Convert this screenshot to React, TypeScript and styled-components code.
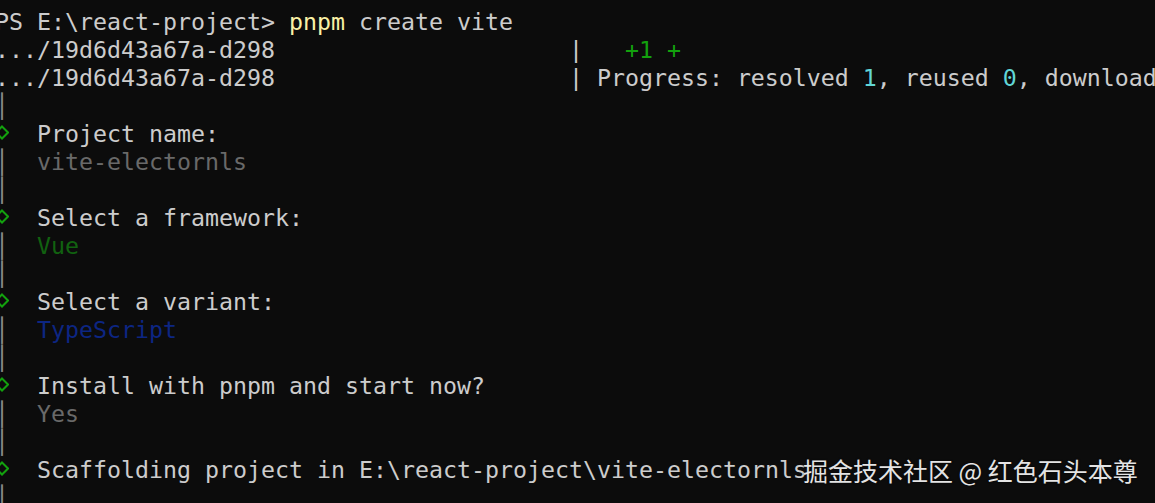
import React from "react";
import styled, { createGlobalStyle } from "styled-components";

const GlobalStyle = createGlobalStyle`
  html, body {
    margin: 0;
    padding: 0;
    background: #0c0c0c;
  }
`;

type Tone = "fg" | "yellow" | "green" | "cyan" | "dim" | "dimGreen" | "dimBlue" | "bar";

const palette: Record<Tone, string> = {
  fg: "#cccccc",
  yellow: "#f9f1a5",
  green: "#13a10e",
  cyan: "#61d6d6",
  dim: "#696969",
  dimGreen: "#116210",
  dimBlue: "#0d2683",
  bar: "#8a8a8a",
};

const Terminal = styled.div`
  position: relative;
  width: 1155px;
  height: 503px;
  overflow: hidden;
  background: #0c0c0c;
  color: #cccccc;
  font-family: "DejaVu Sans Mono", "Liberation Mono", monospace;
  font-size: 23.25px;
  box-sizing: border-box;
  padding-top: 8px;
`;

const Lines = styled.div`
  display: flex;
  flex-direction: column;
  margin-left: -5px;
`;

const Line = styled.div`
  height: 28px;
  line-height: 28px;
  white-space: pre;
`;

const Ink = styled.span<{ $tone: Tone }>`
  color: ${(p) => palette[p.$tone]};
`;

const Gutter = styled.span`
  display: inline-block;
  width: 14px;
  height: 28px;
  overflow: hidden;
  text-align: center;
  vertical-align: top;
  line-height: 28px;
  color: ${palette.bar};
  font-weight: 700;

  svg {
    display: block;
  }
`;

const Watermark = styled.div`
  position: absolute;
  left: 803px;
  top: 455px;
  height: 30px;
  line-height: 30px;
  font-family: "Noto Sans CJK SC", "Noto Sans", sans-serif;
  font-size: 25px;
  color: #e4e4e4;
  white-space: pre;
  text-shadow: 0 0 2px rgba(0, 0, 0, 0.6);
`;

const Diamond = () => (
  <svg width="14" height="28" viewBox="0 0 14 28">
    <polygon
      points="7,6.5 13,12.5 7,18.5 1,12.5"
      fill="none"
      stroke={palette.green}
      strokeWidth="2"
    />
  </svg>
);

type Seg = [string, Tone];
type Row = { gutter?: "bar" | "step"; segs: Seg[] };

const pad = ".../19d6d43a67a-d298" + " ".repeat(21);

const rows: Row[] = [
  { segs: [["PS E:\\react-project> ", "fg"], ["pnpm", "yellow"], [" create vite", "fg"]] },
  { segs: [[pad + "|   ", "fg"], ["+1 +", "green"]] },
  {
    segs: [
      [pad + "| Progress: resolved ", "fg"],
      ["1", "cyan"],
      [", reused ", "fg"],
      ["0", "cyan"],
      [", downloaded 0, added 0", "fg"],
    ],
  },
  { gutter: "bar", segs: [] },
  { gutter: "step", segs: [["Project name:", "fg"]] },
  { gutter: "bar", segs: [["vite-electornls", "dim"]] },
  { gutter: "bar", segs: [] },
  { gutter: "step", segs: [["Select a framework:", "fg"]] },
  { gutter: "bar", segs: [["Vue", "dimGreen"]] },
  { gutter: "bar", segs: [] },
  { gutter: "step", segs: [["Select a variant:", "fg"]] },
  { gutter: "bar", segs: [["TypeScript", "dimBlue"]] },
  { gutter: "bar", segs: [] },
  { gutter: "step", segs: [["Install with pnpm and start now?", "fg"]] },
  { gutter: "bar", segs: [["Yes", "dim"]] },
  { gutter: "bar", segs: [] },
  { gutter: "step", segs: [["Scaffolding project in E:\\react-project\\vite-electornls", "fg"]] },
  { gutter: "bar", segs: [] },
];

export default function App() {
  return (
    <>
      <GlobalStyle />
      <Terminal>
        <Lines>
          {rows.map((row, i) => (
            <Line key={i}>
              {row.gutter && (
                <Gutter>{row.gutter === "step" ? <Diamond /> : "│"}</Gutter>
              )}
              {row.gutter && row.segs.length > 0 ? "  " : ""}
              {row.segs.map(([text, tone], j) => (
                <Ink key={j} $tone={tone}>
                  {text}
                </Ink>
              ))}
            </Line>
          ))}
        </Lines>
        <Watermark>掘金技术社区 @ 红色石头本尊</Watermark>
      </Terminal>
    </>
  );
}
